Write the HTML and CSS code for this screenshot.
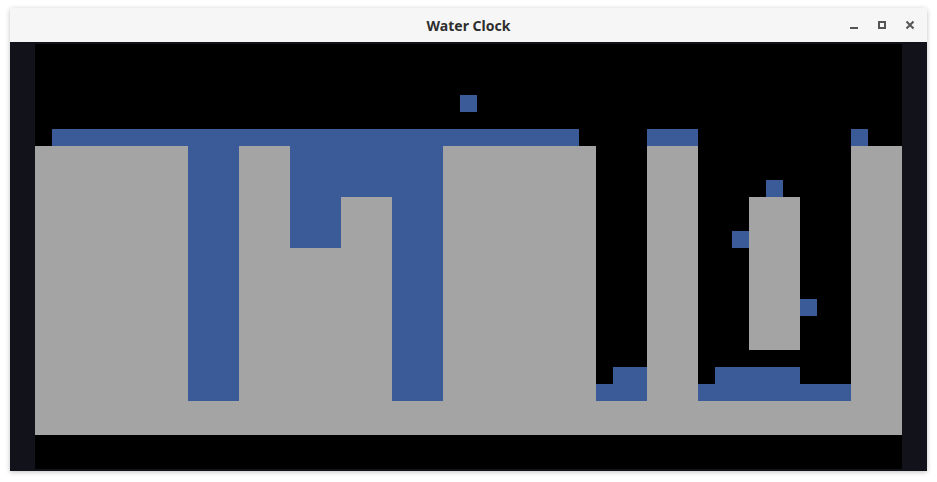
FILE: index.html
```html
<!DOCTYPE html>
<html>
<head>
    <meta charset="UTF-8">
    <title>Water Clock</title>
    <link rel="stylesheet" href="styles.css">
</head>
<body>
    <div class="window">
        <div class="titlebar">
            <span class="title">Water Clock</span>
            <div class="controls">
                <svg class="ctl" width="12" height="12" viewBox="0 0 12 12"><rect x="2" y="8" width="8" height="2" fill="#555"/></svg>
                <svg class="ctl" width="12" height="12" viewBox="0 0 12 12"><rect x="3" y="3" width="6" height="6" fill="none" stroke="#555" stroke-width="2"/></svg>
                <svg class="ctl" width="12" height="12" viewBox="0 0 12 12"><path d="M2.5 2.5 L9.5 9.5 M9.5 2.5 L2.5 9.5" stroke="#555" stroke-width="2"/></svg>
            </div>
        </div>
        <div class="content">
            <div class="board" id="board"></div>
        </div>
    </div>
    <script>
        // 51 x 25 cells, 0 = empty, 1 = rock, 2 = water
        var COLS = 51, ROWS = 25;
        var grid = [];
        for (var r = 0; r < ROWS; r++) {
            grid.push(new Array(COLS).fill(0));
        }
        function fill(v, c0, c1, r0, r1) {
            for (var r = r0; r <= r1; r++)
                for (var c = c0; c <= c1; c++) grid[r][c] = v;
        }
        fill(2, 25, 25, 3, 3);
        fill(2, 1, 31, 5, 5);
        fill(2, 36, 38, 5, 5);
        fill(2, 48, 48, 5, 5);
        fill(1, 0, 50, 6, 22);
        fill(0, 33, 35, 6, 20);
        fill(0, 39, 47, 6, 20);
        fill(2, 9, 11, 6, 20);
        fill(2, 15, 17, 6, 11);
        fill(2, 18, 20, 6, 8);
        fill(2, 21, 23, 6, 20);
        fill(1, 42, 44, 9, 17);
        fill(2, 43, 43, 8, 8);
        fill(2, 41, 41, 11, 11);
        fill(2, 45, 45, 15, 15);
        fill(2, 34, 35, 19, 19);
        fill(2, 33, 35, 20, 20);
        fill(2, 40, 44, 19, 19);
        fill(2, 39, 47, 20, 20);

        var names = ["cell", "cell rock", "cell water"];
        var board = document.getElementById("board");
        for (var r = 0; r < ROWS; r++) {
            for (var c = 0; c < COLS; c++) {
                var d = document.createElement("div");
                d.className = names[grid[r][c]];
                board.appendChild(d);
            }
        }
    </script>
</body>
</html>
```

FILE: styles.css
```css
body {
    margin: 0;
    background-color: #ffffff;
    padding: 8px 10px;
    }
.window {
    width: 917px;
    border-radius: 3px 3px 0 0;
    overflow: hidden;
    box-shadow: 0 1px 5px rgba(0, 0, 0, 0.25);
    }
.titlebar {
    position: relative;
    height: 34px;
    background-color: #f6f6f6;
    display: flex;
    align-items: center;
    justify-content: center;
    }
.title {
    font-family: "Noto Sans", "DejaVu Sans", sans-serif;
    font-weight: 700;
    font-size: 14px;
    color: #2e2e2e;
    }
.controls {
    position: absolute;
    right: 11px;
    top: 11px;
    display: flex;
    gap: 16px;
    }
.ctl {
    display: block;
    }
.content {
    height: 429px;
    background-color: #11121a;
    display: flex;
    align-items: center;
    justify-content: center;
    }
.board {
    display: grid;
    grid-template-columns: repeat(51, 17px);
    grid-template-rows: repeat(25, 17px);
    background-color: #000000;
    }
.cell {
    width: 17px;
    height: 17px;
    }
.rock {
    background-color: #a4a4a4;
    }
.water {
    background-color: #3a5b98;
    }
```
